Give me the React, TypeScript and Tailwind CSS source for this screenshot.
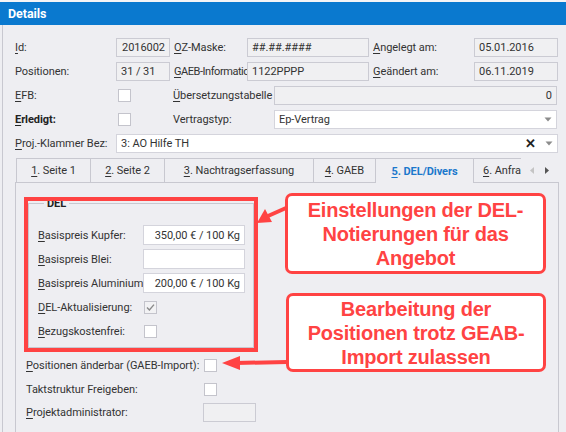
import React from "react";

const RED = "#ff4343";

function U({ children }: { children: React.ReactNode }) {
  return <span className="underline decoration-1 underline-offset-[2px]">{children}</span>;
}

function Label({ w, children, bold, tight }: { w: string; children: React.ReactNode; bold?: boolean; tight?: boolean }) {
  return (
    <div
      className={`${w} shrink-0 whitespace-nowrap ${bold ? "font-bold text-[#222]" : ""} ${
        tight ? "tracking-[-0.45px]" : ""
      }`}
    >
      {children}
    </div>
  );
}

function Box({
  w,
  value,
  align = "left",
  white,
  h = "h-[19px]",
}: {
  w: string;
  value?: string;
  align?: "left" | "right";
  white?: boolean;
  h?: string;
}) {
  return (
    <div
      className={`${w} ${h} shrink-0 flex items-center whitespace-nowrap border px-[4px] ${
        white ? "bg-white border-[#d4d4dc]" : "bg-[#f0f0f2] border-[#cbcbd3]"
      } ${align === "right" ? "justify-end" : "justify-start"}`}
    >
      {value}
    </div>
  );
}

function Check({ checked }: { checked?: boolean }) {
  return (
    <div
      className={`h-[13px] w-[13px] shrink-0 border flex items-center justify-center ${
        checked ? "bg-[#f2f2f4] border-[#c4c4cc]" : "bg-white border-[#c4c4cc]"
      }`}
    >
      {checked ? (
        <svg width="9" height="9" viewBox="0 0 9 9">
          <path d="M1 4.6 L3.4 7 L8 1.6" fill="none" stroke="#8a8a8a" strokeWidth="1.4" />
        </svg>
      ) : null}
    </div>
  );
}

function Caret() {
  return (
    <svg width="8" height="5" viewBox="0 0 8 5" className="shrink-0">
      <path d="M0.5 0.5 L7.5 0.5 L4 4.5 Z" fill="#8c8c8c" />
    </svg>
  );
}

function Tab({ w, children }: { w: string; children: React.ReactNode }) {
  return (
    <div className={`${w} h-[25px] shrink-0 flex items-center justify-center border-t border-l border-b border-[#c8c8d0]`}>
      {children}
    </div>
  );
}

export default function App() {
  return (
    <div className="relative w-[566px] h-[432px] overflow-hidden bg-[#eeeef2] font-['Roboto',sans-serif] text-[11px] tracking-[-0.05px] leading-[15px] text-[#333]">
      <div className="h-[2px] bg-[#f4f4f6]" />
      <div className="h-[23px] bg-[#0a79cf] pl-[8px] flex items-center text-white font-bold text-[12.5px]">
        Details
      </div>

      <div className="ml-[2px] h-[407px] border-l border-[#c8c8d0] pl-[12px] pt-[13px]">
        <div className="flex flex-col gap-[5px]">
          <div className="flex items-center h-[19px]">
            <Label w="w-[101px]">
              <U>I</U>d:
            </Label>
            <Box w="w-[54px]" value="2016002" align="right" />
            <div className="w-[4px]" />
            <Label w="w-[73px]">
              <U>O</U>Z-Maske:
            </Label>
            <Box w="w-[122px]" value="##.##.####" />
            <div className="w-[4px]" />
            <Label w="w-[101px]">
              <U>A</U>ngelegt am:
            </Label>
            <Box w="w-[84px]" value="05.01.2016" />
          </div>
          <div className="flex items-center h-[19px]">
            <Label w="w-[101px]">Positionen:</Label>
            <Box w="w-[54px]" value="31 / 31" />
            <div className="w-[4px]" />
            <Label w="w-[73px]" tight>
              <U>G</U>AEB-Information:
            </Label>
            <Box w="w-[122px]" value="1122PPPP" />
            <div className="w-[4px]" />
            <Label w="w-[101px]">
              <U>G</U>eändert am:
            </Label>
            <Box w="w-[84px]" value="06.11.2019" />
          </div>
          <div className="flex items-center h-[19px]">
            <Label w="w-[103px]">
              <U>E</U>FB:
            </Label>
            <Check />
            <div className="w-[42px]" />
            <Label w="w-[101px]">
              <U>Ü</U>bersetzungstabelle
            </Label>
            <Box w="w-[283px]" value="0" align="right" />
          </div>
          <div className="flex items-center h-[19px]">
            <Label w="w-[103px]" bold>
              <U>E</U>rledigt:
            </Label>
            <Check />
            <div className="w-[42px]" />
            <Label w="w-[101px]">Vertragstyp:</Label>
            <div className="w-[283px] h-[19px] bg-white border border-[#d4d4dc] flex items-center pl-[4px] pr-[4px]">
              <span className="flex-1">Ep-Vertrag</span>
              <Caret />
            </div>
          </div>
          <div className="flex items-center h-[19px]">
            <Label w="w-[101px]">
              <U>P</U>roj.-Klammer Bez:
            </Label>
            <div className="w-[442px] h-[19px] bg-white border border-[#d4d4dc] flex items-center pl-[4px] pr-[4px]">
              <span className="flex-1">3: AO Hilfe TH</span>
              <span className="text-[#222] font-bold text-[13px] mr-[9px]">✕</span>
              <Caret />
            </div>
          </div>
        </div>

        {/* tabs */}
        <div className="mt-[5px] flex w-[544px]">
          <div className="w-[1px] border-b border-[#c8c8d0]" />
          <Tab w="w-[74px]">
            <span>
              <U>1</U>. Seite 1
            </span>
          </Tab>
          <Tab w="w-[74px]">
            <span>
              <U>2</U>. Seite 2
            </span>
          </Tab>
          <Tab w="w-[149px]">
            <span>
              <U>3</U>. Nachtragserfassung
            </span>
          </Tab>
          <Tab w="w-[62px]">
            <span>
              <U>4</U>. GAEB
            </span>
          </Tab>
          <div className="w-[99px] h-[25px] shrink-0 flex items-center justify-center border-t border-l border-r border-[#c8c8d0] text-[#1b78cc] font-bold">
            <span>
              <U>5</U>. DEL/Divers
            </span>
          </div>
          <div className="w-[47px] h-[25px] shrink-0 flex items-center pl-[9px] border-t border-b border-[#c8c8d0] overflow-hidden whitespace-nowrap">
            <span>
              <U>6</U>. Anfra
            </span>
          </div>
          <div className="flex-1 h-[25px] flex items-center gap-[11px] pl-[9px] border-b border-[#c8c8d0]">
            <svg width="4" height="7" viewBox="0 0 4 7">
              <path d="M4 0 L0 3.5 L4 7 Z" fill="#c4c4c4" />
            </svg>
            <svg width="4" height="7" viewBox="0 0 4 7">
              <path d="M0 0 L4 3.5 L0 7 Z" fill="#555" />
            </svg>
          </div>
        </div>

        {/* panel */}
        <div className="w-[544px] h-[260px] border-l border-r border-[#c8c8d0] pl-[12px] pt-[13px]">
          <fieldset className="w-[226px] border border-[#c8c8d0] pl-[9px] pb-[6px]">
            <legend className="ml-[6px] px-[3px] font-bold text-[#222]">DEL</legend>
            <div className="mt-[14px] flex flex-col gap-[4px]">
              <div className="flex items-center h-[20px]">
                <Label w="w-[105px]">
                  <U>B</U>asispreis Kupfer:
                </Label>
                <Box w="w-[102px]" h="h-[20px]" value="350,00 € / 100 Kg" align="right" white />
              </div>
              <div className="flex items-center h-[20px]">
                <Label w="w-[105px]">
                  <U>B</U>asispreis Blei:
                </Label>
                <Box w="w-[102px]" h="h-[20px]" white />
              </div>
              <div className="flex items-center h-[20px]">
                <Label w="w-[105px]">
                  <U>B</U>asispreis Aluminium:
                </Label>
                <Box w="w-[102px]" h="h-[20px]" value="200,00 € / 100 Kg" align="right" white />
              </div>
              <div className="flex items-center h-[20px]">
                <Label w="w-[106px]">
                  <U>D</U>EL-Aktualisierung:
                </Label>
                <Check checked />
              </div>
              <div className="flex items-center h-[20px]">
                <Label w="w-[106px]">
                  <U>B</U>ezugskostenfrei:
                </Label>
                <Check />
              </div>
            </div>
          </fieldset>

          <div className="-ml-[2px] mt-[7px] flex flex-col gap-[4px]">
            <div className="flex items-center h-[20px]">
              <Label w="w-[178px]">
                <U>P</U>ositionen änderbar (GAEB-Import):
              </Label>
              <Check />
            </div>
            <div className="flex items-center h-[20px]">
              <Label w="w-[178px]">Taktstruktur Freigeben:</Label>
              <Check />
            </div>
            <div className="flex items-center h-[19px]">
              <Label w="w-[177px]">
                <U>P</U>rojektadministrator:
              </Label>
              <Box w="w-[53px]" />
            </div>
          </div>
        </div>
      </div>

      {/* annotations */}
      <div
        className="absolute left-[24px] top-[197px] w-[234px] h-[155px] border-4"
        style={{ borderColor: RED }}
      />
      <div
        className="absolute left-[285px] top-[193px] w-[261px] h-[81px] rounded-[7px] border-[3px] bg-white flex items-center justify-center text-center font-['Liberation_Sans',Arial,sans-serif] font-bold text-[20px] leading-[24px] tracking-[-0.2px]"
        style={{ borderColor: RED, color: RED }}
      >
        Einstellungen der DEL-
        <br />
        Notierungen für das
        <br />
        Angebot
      </div>
      <div
        className="absolute left-[286px] top-[293px] w-[260px] h-[79px] rounded-[7px] border-[3px] bg-white flex items-center justify-center text-center font-['Liberation_Sans',Arial,sans-serif] font-bold text-[20px] leading-[24px] tracking-[-0.2px]"
        style={{ borderColor: RED, color: RED }}
      >
        Bearbeitung der
        <br />
        Positionen trotz GEAB-
        <br />
        Import zulassen
      </div>
      <svg className="absolute left-0 top-0 pointer-events-none" width="566" height="432">
        <line x1="286" y1="208" x2="268" y2="216" stroke={RED} strokeWidth="4" />
        <path d="M257 223 L265 209 L272 222 Z" fill={RED} />
        <line x1="287" y1="362" x2="236" y2="363" stroke={RED} strokeWidth="4" />
        <path d="M222 363 L240 356 L240 370 Z" fill={RED} />
      </svg>
    </div>
  );
}
